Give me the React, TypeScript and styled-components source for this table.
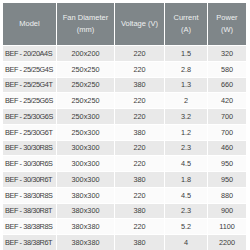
import React from 'react'
import styled, { createGlobalStyle } from 'styled-components'

const GlobalStyle = createGlobalStyle`
  html, body {
    margin: 0;
    padding: 0;
    background: #ffffff;
  }
  body {
    font-family: 'Liberation Sans', Arial, sans-serif;
  }
`

const Page = styled.div`
  width: 250px;
  height: 250px;
  overflow: hidden;
  padding: 3px 0 0 3px;
  box-sizing: border-box;
`

const Table = styled.div`
  display: grid;
  grid-template-columns: 53px 57px 49px 42px 38px;
  grid-template-rows: 42px;
  grid-auto-rows: 14.75px;
  column-gap: 1px;
  row-gap: 1px;
  background: #ffffff;
`

const HeadCell = styled.div`
  background: #7f8689;
  color: #eef0f0;
  font-size: 7.5px;
  line-height: 12px;
  display: flex;
  align-items: center;
  justify-content: center;
  text-align: center;
`

const Cell = styled.div<{ $stripe: boolean; $left?: boolean }>`
  background: ${(p) => (p.$stripe ? '#e9e9e9' : '#fbfbfb')};
  color: #3c3c3c;
  font-size: 7.3px;
  display: flex;
  align-items: center;
  justify-content: ${(p) => (p.$left ? 'flex-start' : 'center')};
  padding-left: ${(p) => (p.$left ? '2px' : '0')};
  letter-spacing: ${(p) => (p.$left ? '-0.4px' : '0')};
  white-space: nowrap;
`

const rows = [
  ['BEF - 20/20A4S', '200x200', '220', '1.5', '320'],
  ['BEF - 25/25G4S', '250x250', '220', '2.8', '580'],
  ['BEF - 25/25G4T', '250x250', '380', '1.3', '660'],
  ['BEF - 25/25G6S', '250x250', '220', '2', '420'],
  ['BEF - 25/30G6S', '250x300', '220', '3.2', '700'],
  ['BEF - 25/30G6T', '250x300', '380', '1.2', '700'],
  ['BEF - 30/30R8S', '300x300', '220', '2.3', '460'],
  ['BEF - 30/30R6S', '300x300', '220', '4.5', '950'],
  ['BEF - 30/30R6T', '300x300', '380', '1.8', '950'],
  ['BEF - 38/30R8S', '380x300', '220', '4.5', '880'],
  ['BEF - 38/30R8T', '380x300', '380', '2.3', '900'],
  ['BEF - 38/38R8S', '380x380', '220', '5.2', '1100'],
  ['BEF - 38/38R6T', '380x380', '380', '4', '2200'],
]

const App: React.FC = () => {
  return (
    <>
      <GlobalStyle />
      <Page>
        <Table>
          <HeadCell>Model</HeadCell>
          <HeadCell>
            Fan Diameter
            <br />
            (mm)
          </HeadCell>
          <HeadCell>Voltage (V)</HeadCell>
          <HeadCell>
            Current
            <br />
            (A)
          </HeadCell>
          <HeadCell>
            Power
            <br />
            (W)
          </HeadCell>
          {rows.map((row, i) =>
            row.map((val, j) => (
              <Cell key={`${i}-${j}`} $stripe={i % 2 === 0} $left={j === 0}>
                {val}
              </Cell>
            )),
          )}
        </Table>
      </Page>
    </>
  )
}

export default App
